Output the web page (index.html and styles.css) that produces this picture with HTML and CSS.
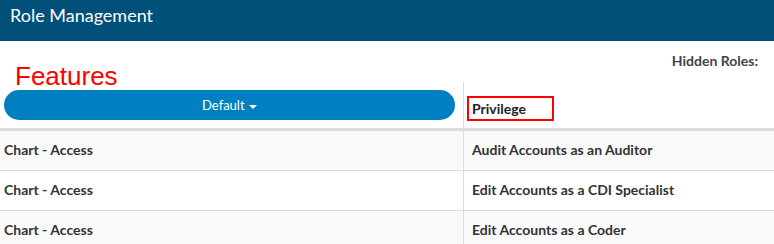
FILE: index.html
```html
<!DOCTYPE html>
<html lang="en">
<head>
  <meta charset="UTF-8" />
  <meta name="viewport" content="width=device-width, initial-scale=1.0" />
  <title>Role Management</title>
  <link rel="stylesheet" href="styles.css">
</head>
<body>
  <div class="topbar">Role Management</div>

  <div class="toolbar">
    <span class="hidden-roles">Hidden Roles:</span>
  </div>

  <span class="note">Features</span>

  <div class="grid">
    <div class="head-cell first">
      <button class="btn-default">Default <span class="caret"></span></button>
    </div>
    <div class="head-cell">
      <span class="col-title">Privilege</span>
    </div>

    <div class="cell first">Chart - Access</div>
    <div class="cell">Audit Accounts as an Auditor</div>

    <div class="cell first">Chart - Access</div>
    <div class="cell">Edit Accounts as a CDI Specialist</div>

    <div class="cell first">Chart - Access</div>
    <div class="cell">Edit Accounts as a Coder</div>
  </div>
</body>
</html>
```

FILE: styles.css
```css
html, body {
  margin: 0;
  overflow: hidden;
}
body {
  font-family: Lato, "Open Sans", Arial, sans-serif;
  background: #fff;
  color: #333;
  position: relative;
}
.topbar {
  height: 36px;
  padding: 5px 10px 0;
  background: #00507a;
  color: #fff;
  font-size: 18px;
  line-height: 20px;
}
.toolbar {
  height: 41px;
  display: flex;
  justify-content: flex-end;
  box-sizing: border-box;
  padding: 10px 16px 0 0;
}
.hidden-roles {
  font-size: 14px;
  font-weight: 700;
  line-height: 20px;
  color: #444;
}
/* red annotation over the page */
.note {
  position: absolute;
  left: 15px;
  top: 63px;
  font-family: "Liberation Sans", Arial, sans-serif;
  font-size: 26px;
  line-height: 26px;
  color: #f00;
}
.grid {
  display: grid;
  grid-template-columns: 463px 1fr;
}
.head-cell {
  box-sizing: border-box;
  height: 49px;
  border-bottom: 3px solid #ddd;
  border-left: 1px solid #ddd;
  padding: 14px 0 0 3px;
}
.head-cell.first {
  border-left: none;
  padding: 8px 8px 0 4px;
}
.btn-default {
  display: block;
  width: 100%;
  height: 30px;
  border: none;
  border-radius: 15px;
  background: #0080c0;
  color: #fff;
  font-family: inherit;
  font-size: 13px;
  padding: 0;
  cursor: pointer;
}
.caret {
  display: inline-block;
  width: 0;
  height: 0;
  margin-left: 1px;
  vertical-align: middle;
  border-top: 4px solid #fff;
  border-left: 4px solid transparent;
  border-right: 4px solid transparent;
}
.col-title {
  display: inline-block;
  box-sizing: border-box;
  width: 87px;
  height: 25px;
  padding-left: 3px;
  border: 2px solid #f00;
  font-size: 14px;
  font-weight: 700;
  line-height: 22px;
  color: #222;
}
.cell {
  box-sizing: border-box;
  height: 40px;
  display: flex;
  align-items: center;
  border-bottom: 1px solid #ddd;
  border-left: 1px solid #ddd;
  padding: 0 0 3px 8px;
  font-size: 14px;
  font-weight: 700;
  color: #333;
}
.cell.first {
  border-left: none;
  padding-left: 4px;
}
.grid .cell:nth-child(4n+3),
.grid .cell:nth-child(4n+4) {
  background: #f9f9f9;
}
```
